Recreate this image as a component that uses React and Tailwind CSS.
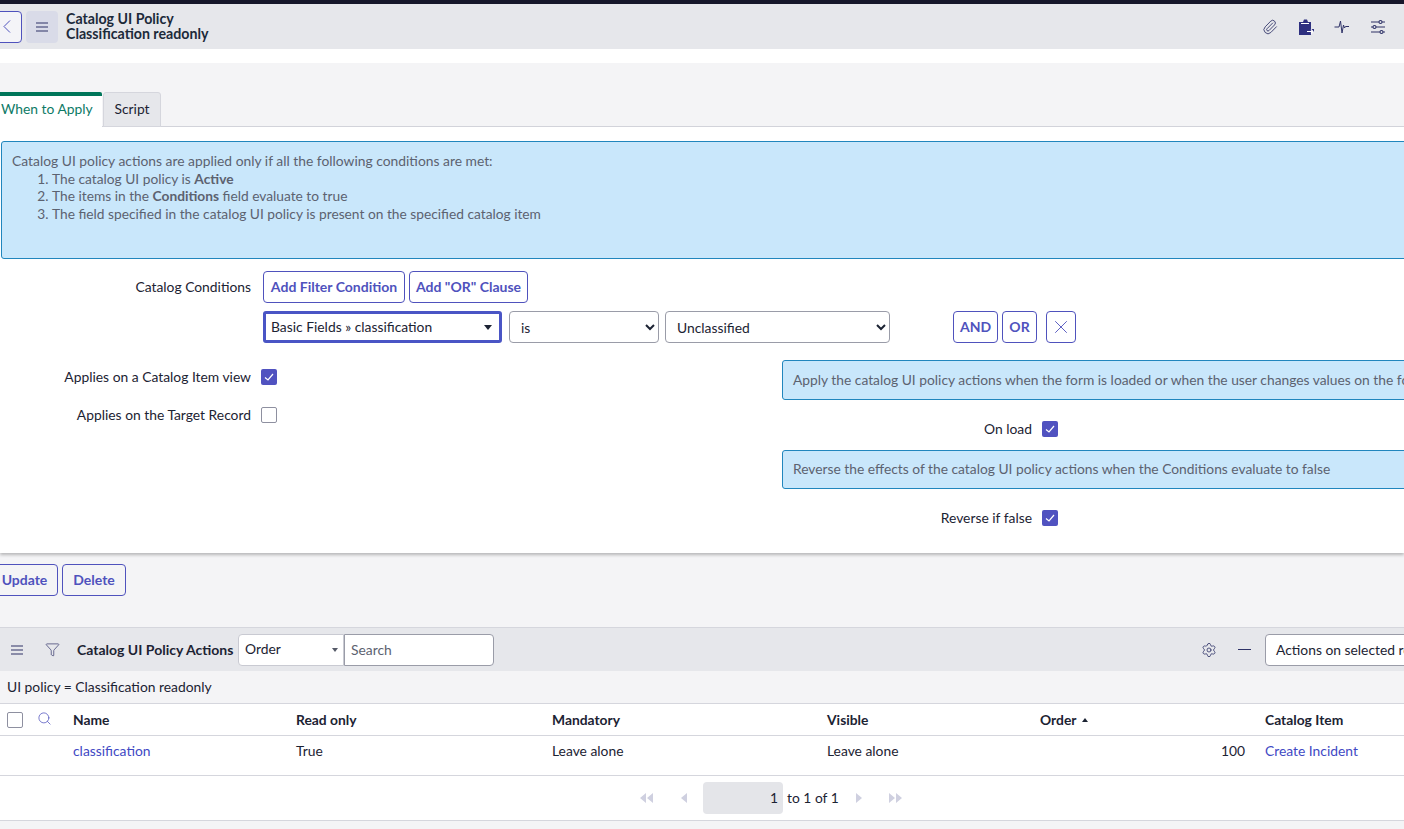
import { Paperclip, Funnel, Search, X, Settings } from "lucide-react";

const CHECK = (
  <svg viewBox="0 0 16 16" className="w-[16px] h-[16px]" fill="none" stroke="white" strokeWidth="1.2">
    <path d="M4 8.5 L7 11 L12 5" />
  </svg>
);

function Checkbox({ checked }) {
  return checked ? (
    <div className="w-4 h-4 rounded-[2px] bg-[#5052c0] flex items-center justify-center">{CHECK}</div>
  ) : (
    <div className="w-4 h-4 rounded-[2px] border border-[#8e90a0] bg-white" />
  );
}

function OutlineBtn({ children, className = "" }) {
  return (
    <button className={`h-8 pb-px shrink-0 border border-[#4f52bd] rounded-[4px] bg-transparent text-[#4f52bd] text-[14px] font-bold flex items-center justify-center ${className}`}>
      {children}
    </button>
  );
}

function Hamburger({ className = "" }) {
  return (
    <svg viewBox="0 0 12 10" className={`w-3 h-[10px] shrink-0 ${className}`} fill="none" stroke="#2e3267" strokeWidth="1.2">
      <path d="M0 1H12M0 5H12M0 9H12" />
    </svg>
  );
}

function FormRow({ label, checked, labelWidth, className = "" }) {
  return (
    <div className={`flex items-center ${className}`}>
      <div className={`text-right ${labelWidth}`}>{label}</div>
      <div className="ml-[10px]">
        <Checkbox checked={checked} />
      </div>
    </div>
  );
}

const COLUMNS = "grid grid-cols-[73px_223px_256px_275px_213px_225px_1fr] items-center";

export default function App() {
  return (
    <div className="w-[1404px] h-[829px] overflow-hidden bg-[#f4f4f6] text-[#1c2333] text-[13.85px] font-['Lato',sans-serif]">
      <div className="h-1 bg-[#16172a]" />

      {/* Form header */}
      <div className="h-[45px] bg-[#e6e7eb] flex items-center">
        <button className="w-[23px] h-8 -ml-px bg-[#f4f4f8] border border-[#4f52bd] rounded-r-[4px] flex items-center pl-[3px]">
          <svg viewBox="0 0 8 13" className="w-2 h-[13px]" fill="none" stroke="#4f52bd" strokeWidth="1">
            <path d="M7 0.5L1 6.5L7 12.5" />
          </svg>
        </button>
        <button className="w-8 h-8 ml-1 bg-[#d9dbe8] rounded-[4px] flex items-center justify-center">
          <Hamburger />
        </button>
        <div className="ml-2 pb-[2px] font-bold text-[14.2px] leading-[15px] text-[#1c2a3a]">
          <div>Catalog UI Policy</div>
          <div>Classification readonly</div>
        </div>
        <div className="ml-auto flex items-center gap-[20px] pr-[18px]">
          <Paperclip size={16} strokeWidth={1.3} color="#2e3267" />
          <svg viewBox="0 0 16 16" className="w-[16px] h-[16px]">
            <path d="M1 3H5L6 0.5H9L10 3H13V10H16V13H13V16H1Z" fill="#2e3080" />
            <path d="M9 12.5H15M13 10.5L15 12.5L13 14.5" stroke="white" strokeWidth="1.2" fill="none" />
            <rect x="3" y="4" width="8" height="1" fill="white" />
          </svg>
          <svg viewBox="0 0 16 16" className="w-[16px] h-[16px]" fill="none" stroke="#2e3267" strokeWidth="1">
            <path d="M0.5 8H5L6.5 2L8 14L9.5 6L10.5 9L11.5 7.5H15" />
          </svg>
          <svg viewBox="0 0 16 16" className="w-[16px] h-[16px]" fill="none" stroke="#2e3267" strokeWidth="1.1">
            <path d="M1 3H9M12 3H15M1 8H3M6 8H15M1 13H10M13 13H15" />
            <circle cx="10.5" cy="3" r="1.5" />
            <circle cx="4.5" cy="8" r="1.5" />
            <circle cx="11.5" cy="13" r="1.5" />
          </svg>
        </div>
      </div>

      <div className="h-[14px] bg-white" />

      {/* Tabs */}
      <div className="h-[64px] flex items-end border-b border-[#d5d6dd]">
        <div className="w-[102px] h-[35px] bg-white border-t-[4px] border-[#00765a] -mb-px rounded-tr-[2px] pl-px pb-[4px] flex items-center text-[#0d7a66]">
          When to Apply
        </div>
        <div className="w-[58px] h-[35px] ml-px -mb-px bg-[#e6e7eb] border border-[#d5d6dd] rounded-t-[3px] flex items-center justify-center">
          Script
        </div>
      </div>

      {/* Form body */}
      <div className="w-[1404px] h-[426px] bg-white shadow-[0_2px_3px_rgba(0,0,0,0.25)] pt-[14px]">
        <div className="w-[1420px] h-[118px] ml-px bg-[#c9e7fb] border border-[#2186bd] rounded-[3px] pt-[10px] pl-[10px] text-[#5c6270] leading-[17.5px]">
          <div>Catalog UI policy actions are applied only if all the following conditions are met:</div>
          <ol className="pl-[40px] list-decimal text-[13.75px]">
            <li>The catalog UI policy is <b>Active</b></li>
            <li>The items in the <b>Conditions</b> field evaluate to true</li>
            <li>The field specified in the catalog UI policy is present on the specified catalog item</li>
          </ol>
        </div>

        <div className="flex mt-3 items-center">
          <div className="w-[251px] text-right">Catalog Conditions</div>
          <div className="flex gap-1 ml-[12px]">
            <OutlineBtn className="w-[142px]">Add Filter Condition</OutlineBtn>
            <OutlineBtn className="w-[119px]">Add "OR" Clause</OutlineBtn>
          </div>
        </div>

        <div className="flex mt-2 pl-[263px] items-center">
          <div className="w-[239px] h-8 border-[3px] border-[#4a55c5] rounded-[3px] flex items-center pl-[5px] pr-[7px] justify-between">
            <span>Basic Fields » classification</span>
            <span className="w-0 h-0 border-x-[4px] border-x-transparent border-t-[5px] border-t-[#1c2333]" />
          </div>
          <select className="w-[150px] h-8 ml-[7px] pl-[7px] border border-[#9a9ca8] rounded-[4px] bg-white">
            <option>is</option>
          </select>
          <select className="w-[225px] h-8 ml-[6px] pl-[7px] border border-[#9a9ca8] rounded-[4px] bg-white">
            <option>Unclassified</option>
          </select>
          <OutlineBtn className="w-[45px] ml-[63px]">AND</OutlineBtn>
          <OutlineBtn className="w-[35px] ml-1">OR</OutlineBtn>
          <OutlineBtn className="w-[30px] ml-[9px]">
            <X size={22} strokeWidth={1} />
          </OutlineBtn>
        </div>

        <div className="flex">
          <div className="w-[782px] shrink-0 pt-[24px] flex flex-col gap-[17px]">
            <FormRow label="Applies on a Catalog Item view" checked labelWidth="w-[251px]" />
            <FormRow label="Applies on the Target Record" labelWidth="w-[251px]" />
          </div>
          <div className="w-[700px] pt-[17px] shrink-0">
            <div className="h-10 bg-[#c9e7fb] border border-[#2186bd] rounded-[3px] pl-[10px] flex items-center text-[13.8px] text-[#5c6270] whitespace-nowrap">
              Apply the catalog UI policy actions when the form is loaded or when the user changes values on the form
            </div>
            <FormRow label="On load" checked labelWidth="w-[250px]" className="mt-[19px]" />
            <div className="h-[39px] mt-[10px] bg-[#c9e7fb] border border-[#2186bd] rounded-[3px] pl-[10px] pt-px flex items-center text-[13.8px] text-[#5c6270] whitespace-nowrap">
              Reverse the effects of the catalog UI policy actions when the Conditions evaluate to false
            </div>
            <FormRow label="Reverse if false" checked labelWidth="w-[250px]" className="mt-[19px]" />
          </div>
        </div>
      </div>

      {/* Form actions */}
      <div className="h-[74px] flex pt-[11px] gap-1 items-start">
        <OutlineBtn className="w-[67px] -ml-[9px]">Update</OutlineBtn>
        <OutlineBtn className="w-16">Delete</OutlineBtn>
      </div>

      {/* Related list */}
      <div className="h-[44px] bg-[#e6e7eb] border-t border-[#d5d6dd] flex items-center whitespace-nowrap">
        <Hamburger className="ml-[11px]" />
        <Funnel size={15} strokeWidth={1.1} color="#2e3267" className="ml-[22px] shrink-0" />
        <span className="ml-[17px] font-bold text-[14px] w-[157px] shrink-0">Catalog UI Policy Actions</span>
        <div className="ml-[4px] w-[106px] shrink-0 h-8 bg-white border border-[#c9cad2] rounded-l-[4px] flex items-center justify-between pl-[6px] pr-[5px]">
          <span>Order</span>
          <span className="w-0 h-0 border-x-[3px] border-x-transparent border-t-[4px] border-t-[#555a68]" />
        </div>
        <div className="w-[150px] shrink-0 h-8 bg-white border border-[#9a9ca8] rounded-r-[4px] flex items-center pl-[6px] pt-px text-[#5c6270]">Search</div>
        <Settings size={16} strokeWidth={1.2} color="#2e3267" className="ml-[707px] shrink-0" />
        <div className="w-[13px] h-px bg-[#2e3267] shrink-0 ml-[21px]" />
        <div className="ml-[14px] w-[180px] h-8 shrink-0 bg-white border border-[#9a9ca8] rounded-l-[4px] flex items-center pl-[10px] pt-px">
          Actions on selected rows
        </div>
      </div>

      <div className="h-[33px] flex items-center pl-[7px] pt-px border-b border-[#d5d6dd]">UI policy = Classification readonly</div>

      <div className="bg-white">
        <div className={`${COLUMNS} h-[32px] pt-px border-b border-[#d5d6dd] font-bold`}>
          <div className="flex items-center pl-[7px]">
            <div className="w-4 h-4 border border-[#8e90a0] rounded-[2px]" />
            <Search size={15} strokeWidth={1.2} color="#4f52bd" className="ml-[14px] -mt-[3px]" />
          </div>
          <div>Name</div>
          <div>Read only</div>
          <div>Mandatory</div>
          <div>Visible</div>
          <div className="flex items-center">
            Order
            <span className="ml-[6px] w-0 h-0 border-x-[3px] border-x-transparent border-b-[4px] border-b-[#1c2333]" />
          </div>
          <div>Catalog Item</div>
        </div>
        <div className={`${COLUMNS} h-[40px] border-b border-[#d5d6dd] pb-[8px]`}>
          <div />
          <div className="text-[#4149c4]">classification</div>
          <div>True</div>
          <div>Leave alone</div>
          <div>Leave alone</div>
          <div className="text-right pr-5">100</div>
          <div className="text-[#4149c4]">Create Incident</div>
        </div>
        <div className="h-[45px] border-b border-[#d5d6dd] flex items-center">
          <svg viewBox="0 0 14 10" className="w-[14px] h-[10px] ml-[640px]" fill="#cfd0e0">
            <path d="M6 0V10L0 5ZM13 0V10L7 5Z" />
          </svg>
          <svg viewBox="0 0 6 10" className="w-[6px] h-[10px] ml-[27px]" fill="#cfd0e0">
            <path d="M6 0V10L0 5Z" />
          </svg>
          <div className="w-[80px] h-8 ml-[16px] bg-[#e4e5e9] rounded-[4px] flex items-center justify-end pr-[5px]">1</div>
          <span className="ml-[4px]">to 1 of 1</span>
          <svg viewBox="0 0 6 10" className="w-[6px] h-[10px] ml-[17px]" fill="#cfd0e0">
            <path d="M0 0V10L6 5Z" />
          </svg>
          <svg viewBox="0 0 14 10" className="w-[14px] h-[10px] ml-[26px]" fill="#cfd0e0">
            <path d="M1 0V10L7 5ZM8 0V10L14 5Z" />
          </svg>
        </div>
      </div>
    </div>
  );
}
